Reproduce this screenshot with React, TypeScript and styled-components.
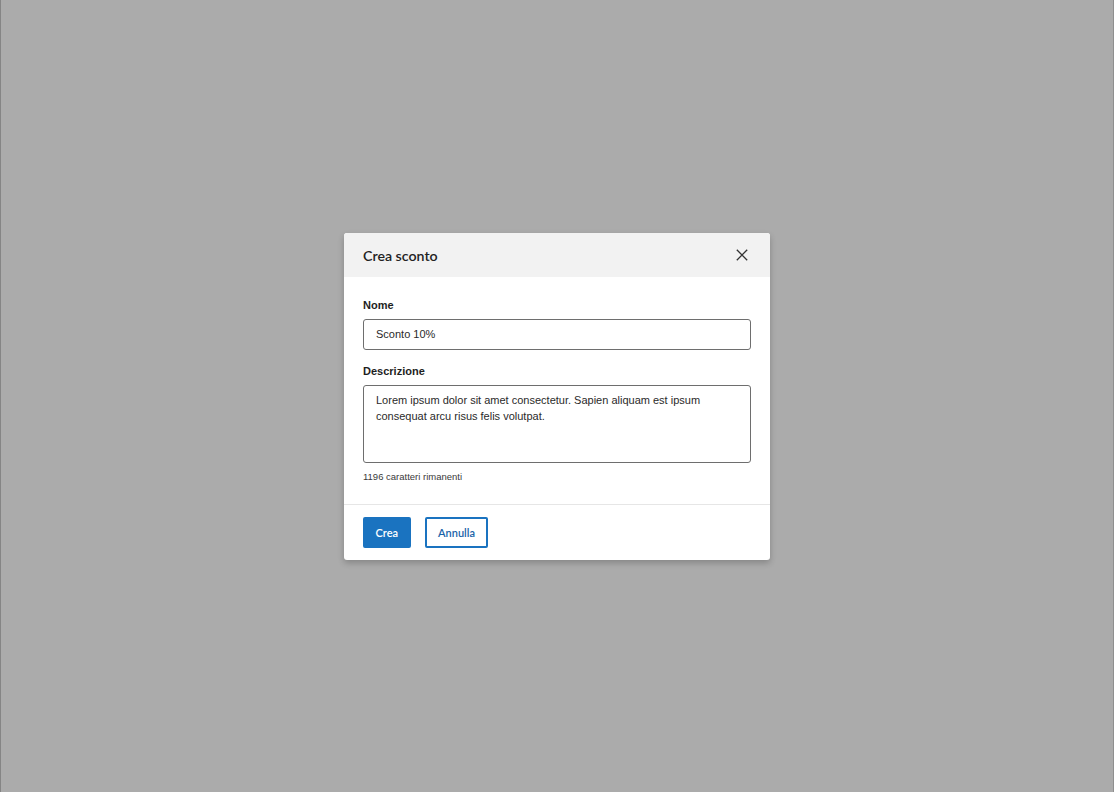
import React from 'react'
import styled, { createGlobalStyle } from 'styled-components'

const GlobalStyle = createGlobalStyle`
  html, body {
    margin: 0;
    padding: 0;
    height: 100%;
  }
  body {
    background: #ababab;
    font-family: 'Liberation Sans', Arial, sans-serif;
  }
  #root {
    height: 100%;
  }
`

const Backdrop = styled.div`
  box-sizing: border-box;
  height: 100vh;
  border-left: 1px solid #858585;
  border-right: 1px solid #8f8f8f;
  display: flex;
  align-items: center;
  justify-content: center;
`

const Dialog = styled.div`
  width: 426px;
  background: #fff;
  border-radius: 3px;
  box-shadow: 0 3px 6px rgba(0, 0, 0, 0.22);
  overflow: hidden;
`

const Header = styled.div`
  height: 44px;
  background: #f2f2f2;
  display: flex;
  align-items: center;
  justify-content: space-between;
  padding: 0 20px 0 19px;
`

const Title = styled.h2`
  margin: 0;
  font-family: Lato, 'Noto Sans', sans-serif;
  font-size: 14.2px;
  font-weight: 600;
  color: #222;
  padding-top: 2px;
`

const CloseButton = styled.button`
  border: 0;
  background: none;
  padding: 0;
  width: 16px;
  height: 16px;
  display: flex;
  align-items: center;
  justify-content: center;
  color: #333;
  cursor: pointer;
`

const Body = styled.div`
  padding: 21px 19px 21px;
  display: flex;
  flex-direction: column;
`

const Label = styled.label<{ $first?: boolean }>`
  display: block;
  font-size: 11px;
  line-height: 14px;
  font-weight: bold;
  color: #1e1e1e;
  margin-top: ${({ $first }) => ($first ? 0 : '14px')};
  margin-bottom: 7px;
`

const TextInput = styled.input`
  box-sizing: border-box;
  width: 100%;
  height: 31px;
  border: 1px solid #6e6e6e;
  border-radius: 3px;
  padding: 0 12px;
  font-family: 'Liberation Sans', Arial, sans-serif;
  font-size: 11px;
  color: #2a2a2a;
  outline: none;
`

const TextArea = styled.textarea`
  box-sizing: border-box;
  width: 100%;
  height: 78px;
  border: 1px solid #6e6e6e;
  border-radius: 3px;
  padding: 6px 12px;
  font-family: 'Liberation Sans', Arial, sans-serif;
  font-size: 11px;
  line-height: 16px;
  color: #2a2a2a;
  resize: none;
  outline: none;
  display: block;
`

const Hint = styled.div`
  font-size: 9.5px;
  line-height: 12px;
  color: #3a3a3a;
  margin-top: 8px;
`

const Footer = styled.div`
  border-top: 1px solid #e6e6e6;
  padding: 12px 19px 12px;
  display: flex;
  gap: 14px;
`

const Button = styled.button<{ $primary?: boolean }>`
  box-sizing: border-box;
  height: 31px;
  padding: 0 ${({ $primary }) => ($primary ? '10.5px' : '11.5px')};
  border-radius: 2px;
  font-family: Lato, 'Noto Sans', sans-serif;
  font-size: 11px;
  font-weight: 600;
  cursor: pointer;
  border: 2px solid #1a73c0;
  background: ${({ $primary }) => ($primary ? '#1a73c0' : '#fff')};
  color: ${({ $primary }) => ($primary ? '#fff' : '#1a63a8')};
`

export default function App() {
  return (
    <>
      <GlobalStyle />
      <Backdrop>
        <Dialog role="dialog" aria-labelledby="dialog-title">
          <Header>
            <Title id="dialog-title">Crea sconto</Title>
            <CloseButton aria-label="Chiudi">
              <svg width="12" height="12" viewBox="0 0 12 12" fill="none" stroke="currentColor" strokeWidth="1.3">
                <path d="M0.8 0.8 L11.2 11.2 M11.2 0.8 L0.8 11.2" />
              </svg>
            </CloseButton>
          </Header>
          <Body>
            <Label $first htmlFor="nome">Nome</Label>
            <TextInput id="nome" defaultValue="Sconto 10%" />
            <Label htmlFor="descrizione">Descrizione</Label>
            <TextArea
              id="descrizione"
              defaultValue="Lorem ipsum dolor sit amet consectetur. Sapien aliquam est ipsum consequat arcu risus felis volutpat."
            />
            <Hint>1196 caratteri rimanenti</Hint>
          </Body>
          <Footer>
            <Button $primary>Crea</Button>
            <Button>Annulla</Button>
          </Footer>
        </Dialog>
      </Backdrop>
    </>
  )
}
